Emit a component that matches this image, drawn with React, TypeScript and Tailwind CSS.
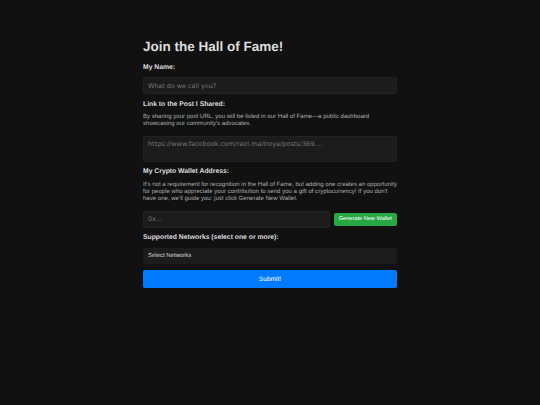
export default function App() {
  return (
    <main className="min-h-[405px] bg-[#111111] font-['Liberation_Sans',Arial,sans-serif] text-[#dddddd] [text-rendering:geometricPrecision]">
      <form className="mx-auto flex w-[254px] flex-col pt-[37px]">
        <h1 className="text-[13.5px] leading-[19px] font-bold">Join the Hall of Fame!</h1>
        <label className="mt-[7px] text-[6.8px] leading-[10px] font-bold">My Name:</label>
        <input
          placeholder="What do we call you?"
          className="mt-[4px] h-[17px] rounded-[2px] border border-[#222] bg-[#1c1c1c] px-[4px] font-['DejaVu_Sans',sans-serif] text-[6.4px] [text-rendering:geometricPrecision] placeholder:text-[#757575]"
        />
        <label className="mt-[6px] text-[6.8px] leading-[10px] font-bold">Link to the Post I Shared:</label>
        <p className="mt-[4px] text-[6.05px] leading-[7px] text-[#aaa]">
          By sharing your post URL, you will be listed in our Hall of Fame—a public dashboard showcasing our community's advocates.
        </p>
        <textarea
          placeholder="https://www.facebook.com/rael.maitreya/posts/369...."
          className="mt-[8px] h-[26px] resize-none rounded-[2px] border border-[#222] bg-[#1c1c1c] px-[4px] py-[3px] font-['DejaVu_Sans',sans-serif] text-[6.5px] leading-[9px] [text-rendering:geometricPrecision] placeholder:text-[#757575]"
        />
        <label className="mt-[5px] text-[6.8px] leading-[10px] font-bold">My Crypto Wallet Address:</label>
        <p className="mt-[4.5px] text-[6.05px] leading-[7px] text-[#aaa]">
          It's not a requirement for recognition in the Hall of Fame, but adding one creates an opportunity for people who appreciate your contribution to send you a gift of cryptocurrency! If you don't have one, we'll guide you: just click Generate New Wallet.
        </p>
        <div className="mt-[8px] flex items-center gap-[4px]">
          <input
            placeholder="0x..."
            className="h-[17.5px] min-w-0 flex-1 rounded-[2px] border border-[#222] bg-[#1c1c1c] px-[4px] font-['DejaVu_Sans',sans-serif] text-[6.4px] [text-rendering:geometricPrecision] placeholder:text-[#757575]"
          />
          <button type="button" className="h-[13px] w-[63.5px] rounded-[2px] bg-[#28a745] text-[5.6px] text-white [text-rendering:geometricPrecision]">
            Generate New Wallet
          </button>
        </div>
        <label className="mt-[5px] text-[6.8px] leading-[10px] font-bold">Supported Networks (select one or more):</label>
        <div className="mt-[4.5px] flex h-[16.5px] items-center rounded-[2px] bg-[#1c1c1c] px-[5px] pt-[1px] text-[6px] text-[#ddd]">
          Select Networks
        </div>
        <button type="button" className="mt-[6px] h-[18px] rounded-[2px] bg-[#007bff] pt-[1px] text-[6.6px] text-white [text-rendering:geometricPrecision]">
          Submit!
        </button>
      </form>
    </main>
  );
}
